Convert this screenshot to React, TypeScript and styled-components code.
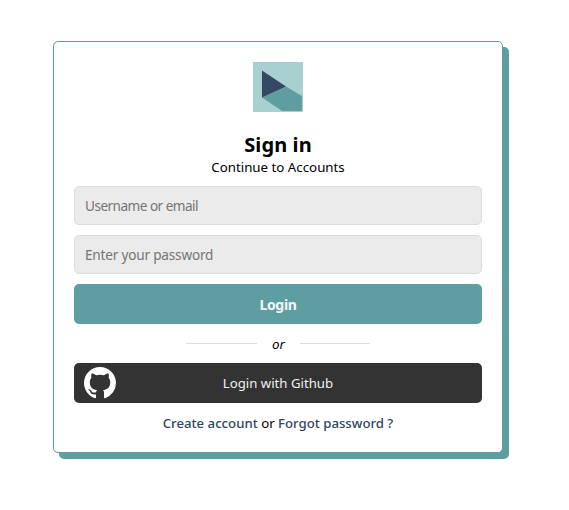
import React from "react";
import styled, { createGlobalStyle } from "styled-components";

const GlobalStyle = createGlobalStyle`
  *, *::before, *::after { box-sizing: border-box; }
  body {
    margin: 0;
    background: #fff;
    color: #000;
    font-family: "Noto Sans", "Open Sans", sans-serif;
  }
`;

const Page = styled.main`
  padding: 41px 66px 57px 53px;
`;

const Card = styled.form`
  display: flex;
  flex-direction: column;
  width: 450px;
  height: 412px;
  padding: 20px;
  background: #fff;
  border: 1px solid #5f9ea0;
  border-radius: 5px;
  box-shadow: 6px 6px 0 #5f9ea0;
`;

const Logo = styled.svg`
  display: block;
  align-self: center;
  flex: none;
`;

const Title = styled.h1`
  flex: none;
  margin: 21px 0 0;
  height: 24px;
  line-height: 24px;
  font-size: 20px;
  font-weight: 700;
  letter-spacing: 0.1px;
  text-align: center;
`;

const Subtitle = styled.p`
  flex: none;
  margin: 0 0 8px;
  height: 21px;
  line-height: 21px;
  font-size: 13.3px;
  text-align: center;
`;

const Field = styled.input<{ $tracking: number }>`
  display: block;
  flex: none;
  width: 100%;
  height: 39px;
  margin: 0 0 10px;
  padding: 0 10px;
  border: 1px solid #dcdcdc;
  border-radius: 5px;
  background: #ebebeb;
  font-family: "Noto Sans", sans-serif;
  font-size: 13.6px;
  letter-spacing: ${(p) => p.$tracking}px;
  outline: none;

  &::placeholder {
    color: #757575;
    opacity: 1;
  }
`;

const Button = styled.button<{ $dark?: boolean }>`
  display: grid;
  grid-template-columns: 32px 1fr 32px;
  align-items: center;
  flex: none;
  width: 100%;
  height: 40px;
  padding: 0 10px;
  border: 0;
  border-radius: 5px;
  background: ${(p) => (p.$dark ? "#333" : "#5f9ea0")};
  color: ${(p) => (p.$dark ? "#f0f0f0" : "#f0f8f8")};
  font-family: "Noto Sans", sans-serif;
  font-size: ${(p) => (p.$dark ? "13.2px" : "14px")};
  font-weight: ${(p) => (p.$dark ? 400 : 700)};
  letter-spacing: ${(p) => (p.$dark ? "0" : "-0.3px")};
`;

const ButtonLabel = styled.span`
  grid-column: 2;
  text-align: center;
`;

const Divider = styled.div`
  display: flex;
  flex: none;
  align-items: center;
  justify-content: center;
  height: 39px;
  font-size: 13.4px;
  font-style: italic;

  &::before,
  &::after {
    content: "";
    height: 1px;
    background: #dcdcdc;
  }
  &::before { width: 71px; }
  &::after { width: 70px; }
`;

const DividerLabel = styled.span`
  width: 43px;
  text-align: center;
`;

const Links = styled.p`
  flex: none;
  margin: 10px 0 0;
  height: 19px;
  line-height: 20px;
  font-size: 13.2px;
  text-align: center;
  white-space: nowrap;
`;

const Link = styled.a`
  color: #2f4560;
  font-weight: 500;
  text-decoration: none;
`;

const GithubMark = () => (
  <svg width="32" height="32" viewBox="0 0 16 16" fill="#fff" aria-hidden="true">
    <path
      fillRule="evenodd"
      d="M8 0C3.58 0 0 3.58 0 8c0 3.54 2.29 6.53 5.47 7.59.4.07.55-.17.55-.38 0-.19-.01-.82-.01-1.49-2.01.37-2.53-.49-2.69-.94-.09-.23-.48-.94-.82-1.13-.28-.15-.68-.52-.01-.53.63-.01 1.08.58 1.23.82.72 1.21 1.87.87 2.33.66.07-.52.28-.87.51-1.07-1.78-.2-3.64-.89-3.64-3.95 0-.87.31-1.59.82-2.15-.08-.2-.36-1.02.08-2.12 0 0 .67-.21 2.2.82.64-.18 1.32-.27 2-.27s1.36.09 2 .27c1.53-1.04 2.2-.82 2.2-.82.44 1.1.16 1.92.08 2.12.51.56.82 1.27.82 2.15 0 3.07-1.87 3.75-3.65 3.95.29.25.54.73.54 1.48 0 1.07-.01 1.93-.01 2.2 0 .21.15.46.55.38A8.01 8.01 0 0 0 16 8c0-4.42-3.58-8-8-8z"
    />
  </svg>
);

export default function App() {
  return (
    <Page>
      <GlobalStyle />
      <Card onSubmit={(e) => e.preventDefault()}>
        <Logo width="50" height="50" viewBox="0 0 50 50" aria-hidden="true">
          <rect width="50" height="50" fill="#a9d0d1" />
          <path d="M9 35.5 33 24.5 49 34v15H29z" fill="#5f9ea0" />
          <path d="M9 8.5 33 24.5 9 35.5z" fill="#344863" />
        </Logo>
        <Title>Sign in</Title>
        <Subtitle>Continue to Accounts</Subtitle>
        <Field type="text" placeholder="Username or email" $tracking={-0.53} />
        <Field type="password" placeholder="Enter your password" $tracking={-0.2} />
        <Button type="submit">
          <ButtonLabel>Login</ButtonLabel>
        </Button>
        <Divider>
          <DividerLabel>or</DividerLabel>
        </Divider>
        <Button type="button" $dark>
          <GithubMark />
          <ButtonLabel>Login with Github</ButtonLabel>
        </Button>
        <Links>
          <Link>Create account</Link> or <Link>Forgot password ?</Link>
        </Links>
      </Card>
    </Page>
  );
}
